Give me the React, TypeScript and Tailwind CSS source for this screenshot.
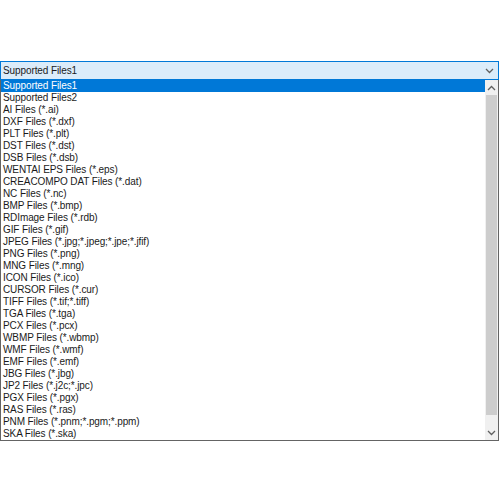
const items = [
  'Supported Files1',
  'Supported Files2',
  'AI Files (*.ai)',
  'DXF Files (*.dxf)',
  'PLT Files (*.plt)',
  'DST Files (*.dst)',
  'DSB Files (*.dsb)',
  'WENTAI EPS Files (*.eps)',
  'CREACOMPO DAT Files (*.dat)',
  'NC Files (*.nc)',
  'BMP Files (*.bmp)',
  'RDImage Files (*.rdb)',
  'GIF Files (*.gif)',
  'JPEG Files (*.jpg;*.jpeg;*.jpe;*.jfif)',
  'PNG Files (*.png)',
  'MNG Files (*.mng)',
  'ICON Files (*.ico)',
  'CURSOR Files (*.cur)',
  'TIFF Files (*.tif;*.tiff)',
  'TGA Files (*.tga)',
  'PCX Files (*.pcx)',
  'WBMP Files (*.wbmp)',
  'WMF Files (*.wmf)',
  'EMF Files (*.emf)',
  'JBG Files (*.jbg)',
  'JP2 Files (*.j2c;*.jpc)',
  'PGX Files (*.pgx)',
  'RAS Files (*.ras)',
  'PNM Files (*.pnm;*.pgm;*.ppm)',
  'SKA Files (*.ska)',
]

const Chevron = ({ up = false, className = '' }: { up?: boolean; className?: string }) => (
  <svg width="9" height="6" viewBox="0 0 9 6" className={className}>
    <path
      d={up ? 'M1 5 L4.5 1.5 L8 5' : 'M1 1 L4.5 4.5 L8 1'}
      fill="none"
      stroke="currentColor"
      strokeWidth="1.3"
    />
  </svg>
)

export default function App() {
  return (
    <div
      className="w-[500px] h-[500px] bg-white pt-[61px] text-[10px] tracking-[-0.1px] text-[#1a1a1a]"
      style={{ fontFamily: '"Liberation Sans", Arial, sans-serif' }}
    >
      {/* Combo box */}
      <div className="w-[499px] h-[19px] border border-[#0078d7] bg-[#dbecfa] flex items-center justify-between pl-[2px] pr-[4px]">
        <span className="leading-none">Supported Files1</span>
        <Chevron className="text-[#606060]" />
      </div>

      {/* Drop-down list */}
      <div className="w-[499px] h-[361px] border border-t-0 border-[#646464] flex">
        <ul className="flex-1 flex flex-col">
          {items.map((item, i) => (
            <li
              key={item}
              className={
                'h-[12px] leading-[12px] pl-[2px] whitespace-nowrap ' +
                (i === 0 ? 'bg-[#0078d7] text-white' : '')
              }
            >
              {item}
            </li>
          ))}
        </ul>
        <div className="w-[13px] bg-[#f0f0f0] flex flex-col">
          <div className="h-[15px] flex items-center justify-center text-[#606060]">
            <Chevron up />
          </div>
          <div className="mx-[1px] h-[320px] bg-[#cdcdcd]" />
          <div className="flex-1" />
          <div className="h-[15px] flex items-center justify-center text-[#606060]">
            <Chevron />
          </div>
        </div>
      </div>
    </div>
  )
}
